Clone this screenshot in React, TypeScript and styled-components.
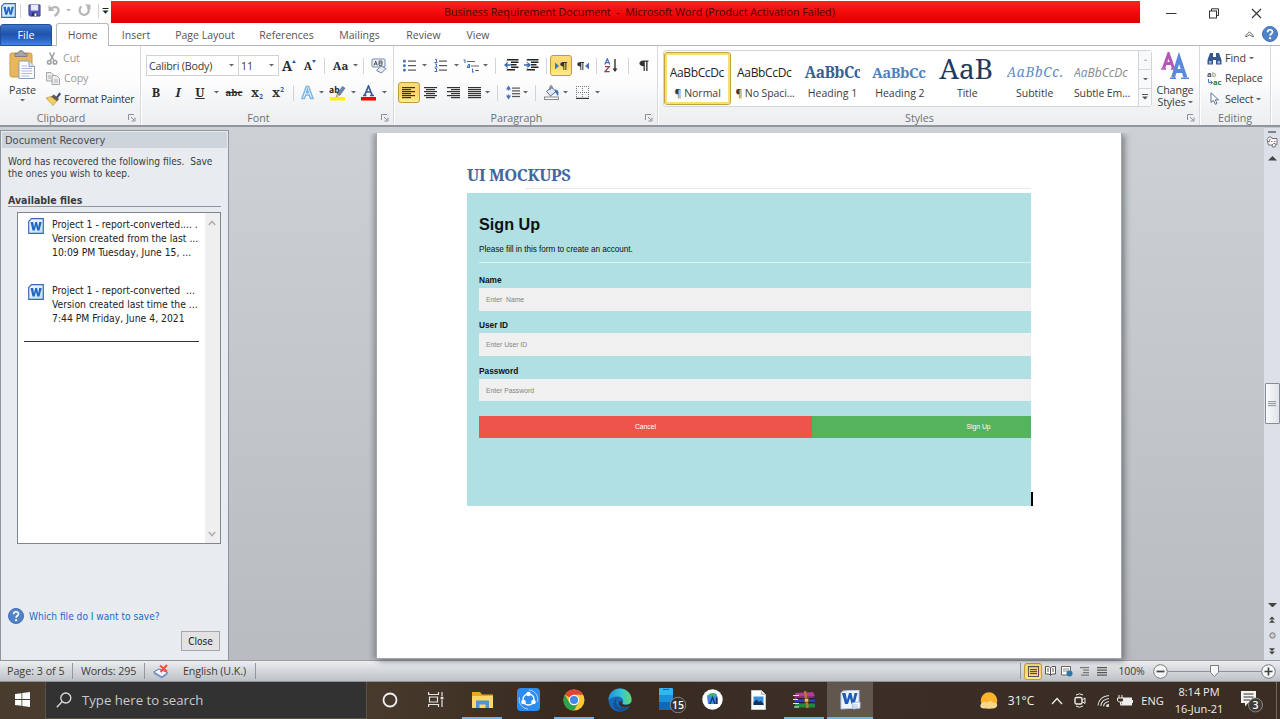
import React from 'react';
import styled, { createGlobalStyle, css } from 'styled-components';

const ui = `"Open Sans", "Noto Sans", sans-serif`;
const tahoma = `"DejaVu Sans Condensed", "DejaVu Sans", sans-serif`;

const Global = createGlobalStyle`
  * { box-sizing: border-box; }
  html, body { margin: 0; padding: 0; overflow: hidden; }
  body { width: 1280px; height: 719px; font-family: ${ui}; background: #fff; }
  svg { display: block; flex: none; }
`;

const Screen = styled.div`
  width: 1280px;
  height: 719px;
  display: flex;
  flex-direction: column;
  overflow: hidden;
`;

const Txt = styled.span<{ s?: number; ls?: number; c?: string; b?: boolean }>`
  font-size: ${p => p.s ?? 10.7}px;
  letter-spacing: ${p => p.ls ?? 0}px;
  color: ${p => p.c ?? '#3b3b3b'};
  font-weight: ${p => (p.b ? 700 : 400)};
  white-space: pre;
`;

/* ---------- title bar ---------- */
const TitleBar = styled.header`
  height: 24px;
  display: flex;
  align-items: flex-start;
`;
const QuickAccess = styled.div`
  width: 111px;
  height: 21px;
  display: flex;
  align-items: center;
  padding-left: 1px;
`;
const TitleStrip = styled.div`
  width: 1029px;
  height: 22px;
  margin-top: 1px;
  display: flex;
  align-items: center;
  padding-left: 333px;
  background: linear-gradient(#fb2222, #f50d0d 45%, #d90000);
`;
const WindowButtons = styled.div`
  flex: 1;
  height: 26px;
  display: flex;
  align-items: center;
  padding-left: 26px;
  gap: 32px;
`;
const Cell = styled.div<{ w: number }>`
  width: ${p => p.w}px;
  flex: none;
  display: flex;
  align-items: center;
  justify-content: center;
`;
const Divider = styled.i<{ h?: number; c?: string }>`
  width: 1px;
  height: ${p => p.h ?? 16}px;
  background: ${p => p.c ?? '#d0d3d8'};
`;

/* ---------- tabs ---------- */
const Tabs = styled.nav`
  height: 22px;
  display: flex;
  align-items: flex-end;
  border-bottom: 1px solid #b2b6bc;
`;
const Tab = styled.div<{ w: number; kind?: 'file' | 'active' }>`
  width: ${p => p.w}px;
  height: 22px;
  display: flex;
  align-items: center;
  justify-content: center;
  padding-top: 1px;
  ${p => p.kind === 'file' && css`
    margin-right: 4px;
    margin-bottom: -1px;
    padding-top: 0;
    border-radius: 3px 3px 0 0;
    border: 1px solid #1f4f9d;
    background: linear-gradient(#3f74c9, #1f54ae 45%, #2a63c0 70%, #4485df);
  `}
  ${p => p.kind === 'active' && css`
    height: 23px;
    margin-bottom: -1px;
    padding-top: 0;
    border: 1px solid #b6babf;
    border-bottom: none;
    border-radius: 3px 3px 0 0;
    background: #fff;
  `}
`;
const TabsEnd = styled.div`
  flex: 1;
  height: 22px;
  display: flex;
  align-items: center;
  justify-content: flex-end;
  gap: 8px;
  padding-right: 2px;
`;

/* ---------- ribbon ---------- */
const Ribbon = styled.section`
  height: 81px;
  flex: none;
  display: flex;
  background: linear-gradient(#fff, #fdfdfe 45%, #f1f3f5 75%, #eceef1);
  border-bottom: 2px solid #92979e;
`;
const Group = styled.div<{ w: number }>`
  width: ${p => p.w}px;
  height: 79px;
  display: flex;
  flex-direction: column;
  border-right: 1px solid #d6d9dd;
  box-shadow: 1px 0 0 #fff;
`;
const GroupBody = styled.div<{ pl?: number; pt?: number; col?: boolean }>`
  height: 63px;
  display: flex;
  flex-direction: ${p => (p.col ? 'column' : 'row')};
  padding-left: ${p => p.pl ?? 4}px;
  padding-top: ${p => p.pt ?? 6}px;
`;
const GroupLabel = styled.div<{ shift?: number }>`
  height: 16px;
  display: grid;
  grid-template-columns: 16px 1fr 16px;
  align-items: center;
  justify-items: center;
  padding-top: 2px;
  margin-left: ${p => p.shift ?? 0}px;
`;
const ToolRow = styled.div`
  height: 27px;
  display: flex;
  align-items: center;
`;
const Combo = styled.div<{ w: number }>`
  width: ${p => p.w}px;
  height: 21px;
  margin-right: -1px;
  display: flex;
  align-items: center;
  justify-content: space-between;
  padding: 0 4px 0 2px;
  border: 1px solid #cfd2d6;
  background: #fff;
`;
const Hot = styled.div<{ w?: number; h?: number }>`
  width: ${p => p.w ?? 22}px;
  height: ${p => p.h ?? 21}px;
  display: flex;
  align-items: center;
  justify-content: center;
  border: 1px solid #c39b3c;
  border-radius: 3px;
  background: linear-gradient(#fbdc82, #fbd566 50%, #ffec8b);
`;
const Glyph = styled.b<{ s?: number; it?: boolean; u?: boolean; strike?: boolean }>`
  font-family: "Noto Serif", "DejaVu Serif", "Liberation Serif", serif;
  font-size: ${p => p.s ?? 12.5}px;
  line-height: 14px;
  color: #2c2c2c;
  font-style: ${p => (p.it ? 'italic' : 'normal')};
  text-decoration: ${p => (p.u ? 'underline' : p.strike ? 'line-through' : 'none')};
`;
const Mark = styled.sup<{ low?: boolean }>`
  font-family: ${ui};
  font-size: 6.5px;
  line-height: 7px;
  font-weight: 700;
  color: #2f5ca8;
  align-self: ${p => (p.low ? 'flex-end' : 'flex-start')};
`;
const PasteColumn = styled.div`
  width: 46px;
  display: flex;
  flex-direction: column;
  align-items: center;
  padding: 2px 1px 0 0;
  > span { margin: 2px 0 1px; line-height: 16px; }
`;
const CommandList = styled.div`
  display: flex;
  flex-direction: column;
`;
const Command = styled.div<{ g?: number; h?: number }>`
  height: ${p => p.h ?? 20.5}px;
  display: flex;
  align-items: center;
  gap: ${p => p.g ?? 4}px;
`;
const Gallery = styled.div`
  width: 489px;
  height: 57px;
  display: flex;
  padding: 1px 0;
  border: 1px solid #d3d6da;
  border-radius: 3px;
  background: #fff;
`;
const StyleCard = styled.div<{ on?: boolean }>`
  width: 67.4px;
  height: 53px;
  flex: none;
  display: flex;
  flex-direction: column;
  align-items: center;
  border-radius: 3px;
  padding: 1px 5px 0;
  border: 1px solid transparent;
  ${p => p.on && css`
    border-color: #c6a143;
    box-shadow: inset 0 0 0 2px #fbdd77;
  `}
`;
const Sample = styled.div`
  width: 56px;
  height: 32px;
  display: flex;
  align-items: flex-end;
  overflow: hidden;
`;
const SampleText = styled.span<{ f?: string; s: number; c: string; ls?: number; w?: number; it?: boolean; lh?: number }>`
  font-family: ${p => p.f ?? ui};
  font-size: ${p => p.s}px;
  line-height: ${p => p.lh ?? 27}px;
  color: ${p => p.c};
  letter-spacing: ${p => p.ls ?? 0}px;
  font-weight: ${p => p.w ?? 400};
  font-style: ${p => (p.it ? 'italic' : 'normal')};
  white-space: nowrap;
`;
const GalleryScroll = styled.div`
  width: 13px;
  margin: -1px 0;
  margin-left: auto;
  display: grid;
  grid-template-rows: 1fr 1fr 1fr;
  border-left: 1px solid #d3d6da;
  background: #f8f9fa;
  > div { display: flex; align-items: center; justify-content: center; }
  > div + div { border-top: 1px solid #d3d6da; }
`;
const ChangeStyles = styled.div`
  width: 46px;
  display: flex;
  flex-direction: column;
  align-items: center;
  padding-top: 2px;
  > span { margin-top: 4px; line-height: 12px; }
`;

/* ---------- workspace ---------- */
const Workspace = styled.main`
  height: 534px;
  flex: none;
  display: flex;
  background: linear-gradient(#cdd0d5, #b8bbc0);
  border-bottom: 1px solid #989ca2;
`;
const Panel = styled.aside`
  width: 229px;
  height: 531px;
  flex: none;
  margin-top: 3px;
  display: flex;
  flex-direction: column;
  border: 1px solid #8e959d;
  background: #e8ecf1;
  font-family: ${tahoma};
`;
const PanelTitle = styled.div`
  height: 16px;
  margin: 1px 1px 0;
  padding-left: 3px;
  display: flex;
  align-items: center;
  background: #cdd4dc;
`;
const PanelIntro = styled.div`
  margin: 8px 0 0 7px;
  line-height: 12.3px;
  height: 25px;
  display: flex;
  flex-direction: column;
`;
const PanelHeading = styled.div`
  margin: 12px 7px 0 7px;
  height: 14px;
  line-height: 12px;
  border-bottom: 1px solid #8e949c;
`;
const FileBox = styled.div`
  width: 204px;
  height: 332px;
  margin: 5px 0 0 16px;
  display: flex;
  border: 1px solid #80868e;
  background: #fff;
`;
const FileList = styled.div`
  width: 187px;
  padding: 5px 0 0 10px;
`;
const FileEntry = styled.div`
  height: 65.5px;
  display: flex;
  gap: 8px;
`;
const FileLines = styled.div`
  display: flex;
  flex-direction: column;
  margin-top: -1px;
  > span { height: 14px; line-height: 14px; }
`;
const FileRule = styled.div`
  width: 175px;
  height: 1px;
  margin: -8px 0 0 -4px;
  background: #333;
`;
const FileScroll = styled.div`
  flex: 1;
  display: flex;
  flex-direction: column;
  justify-content: space-between;
  align-items: center;
  padding: 7px 2px 6px 0;
  background: #efefef;
`;
const HelpRow = styled.div`
  margin: 64px 0 0 7px;
  height: 16px;
  display: flex;
  align-items: center;
  gap: 5px;
`;
const CloseButton = styled.div`
  width: 39px;
  height: 20px;
  margin: 7px 8px 0 auto;
  display: flex;
  align-items: center;
  justify-content: center;
  border: 1px solid #a7a7a7;
  background: #e2e2e2;
`;
const Canvas = styled.div`
  flex: 1;
  height: 533px;
  padding: 6px 0 0 147px;
`;
const Page = styled.article`
  width: 746px;
  height: 526px;
  padding: 31px 0 0 90px;
  border: 1px solid #a3a7ac;
  border-top: none;
  background: #fff;
  box-shadow: 3px 2px 6px rgba(70, 75, 82, .55), -3px 0 5px rgba(70, 75, 82, .35);
  clip-path: inset(0 -10px -10px -10px);
`;
const DocHeading = styled.h1`
  margin: 0;
  height: 24px;
  font: 700 16.5px/22px "Noto Serif", Cambria, "Liberation Serif", serif;
  letter-spacing: -.42px;
  color: #43669e;
`;
const HeadingRule = styled.div`
  width: 506px;
  height: 1px;
  margin: 0 0 4px 58px;
  background: #e6e8ea;
`;
const FormLine = styled.div`
  display: flex;
  align-items: flex-end;
`;
const Form = styled.form`
  width: 564px;
  height: 313px;
  padding: 21px 0 0 12px;
  background: #b0dfe4;
  font-family: "Liberation Sans", Arial, sans-serif;
  color: #111;
`;
const Caret = styled.i`
  width: 2px;
  height: 14px;
  background: #000;
`;
const FormTitle = styled.h2`
  margin: 0;
  height: 31px;
  font-size: 16.2px;
  line-height: 20px;
  font-weight: 700;
`;
const FormText = styled.p`
  margin: 0;
  height: 17px;
  font-size: 8.2px;
  line-height: 10px;
  letter-spacing: -.05px;
`;
const FormRule = styled.div`
  height: 1px;
  background: #e3f0f2;
`;
const Field = styled.div`
  height: 45.4px;
  display: flex;
  flex-direction: column;
`;
const FieldLabel = styled.label`
  height: 14px;
  font-size: 8.3px;
  line-height: 12px;
  font-weight: 700;
`;
const Input = styled.div`
  height: 22.6px;
  padding-left: 7px;
  font-size: 6.8px;
  line-height: 23px;
  color: #858585;
  background: #f0f0f0;
  white-space: pre;
`;
const FormButtons = styled.div`
  height: 22px;
  display: flex;
  overflow: hidden;
`;
const FormButton = styled.div<{ c: string }>`
  width: 333px;
  flex: none;
  font-size: 6.8px;
  line-height: 22px;
  text-align: center;
  color: #fff;
  background: ${p => p.c};
`;
const VScroll = styled.div`
  width: 16px;
  height: 533px;
  display: flex;
  flex-direction: column;
  align-items: center;
  border-top: 1px solid #c4c8cd;
  background: #dce1e9;
`;
const Thumb = styled.div`
  width: 15px;
  height: 41px;
  display: flex;
  align-items: center;
  justify-content: center;
  border: 1px solid #868c95;
  border-radius: 1px;
  background: linear-gradient(90deg, #fafbfc, #dfe3e9);
`;
const Gap = styled.div<{ h: number }>`
  height: ${p => p.h}px;
  flex: none;
`;

/* ---------- status bar ---------- */
const StatusBar = styled.footer`
  height: 21px;
  flex: none;
  display: flex;
  align-items: center;
  background: linear-gradient(#eceef0, #d6d9dc 45%, #bec2c7);
  border-bottom: 1px solid #8f9296;
`;
const StatusItem = styled.div<{ w: number; pl?: number }>`
  width: ${p => p.w}px;
  height: 16px;
  display: flex;
  align-items: center;
  padding-left: ${p => p.pl ?? 7}px;
  border-right: 1px solid #93979c;
`;
const ZoomTrack = styled.div`
  width: 93px;
  height: 14px;
  display: flex;
  align-items: center;
  justify-content: center;
  background: linear-gradient(#8e9297, #8e9297) center / 100% 1px no-repeat;
`;

/* ---------- taskbar ---------- */
const Taskbar = styled.div`
  height: 37px;
  flex: none;
  display: flex;
  background: linear-gradient(90deg, #483c2f, #47392c 30%, #38291f 45%, #3a2e26 60%, #392d24);
`;
const SearchBox = styled.div`
  width: 322px;
  height: 37px;
  flex: none;
  display: flex;
  align-items: center;
  gap: 10px;
  padding-left: 10px;
  background: #323232;
  border: 1px solid #5a5148;
  border-top: none;
`;
const TaskButton = styled.div<{ w?: number; open?: boolean; on?: boolean }>`
  width: ${p => p.w ?? 46}px;
  height: 37px;
  flex: none;
  display: flex;
  align-items: center;
  justify-content: center;
  border-bottom: 2px solid transparent;
  ${p => p.open && css`
    border-image: linear-gradient(90deg, transparent 4px, #76b1e6 4px, #76b1e6 calc(100% - 4px), transparent calc(100% - 4px)) 1;
    border-width: 0 0 2px;
    border-style: solid;
  `}
  ${p => p.on && css`background: #62574e; border-bottom-color: #76b1e6;`}
`;
const PhoneSlot = styled.div`
  padding-left: 14px;
`;
const Tray = styled.div`
  flex: 1;
  display: flex;
  align-items: center;
`;
const Clock = styled.div`
  width: 56px;
  display: flex;
  flex-direction: column;
  align-items: center;
  > span { line-height: 16.5px; }
`;
const DesktopPeek = styled.i`
  width: 4px;
  height: 37px;
  margin-left: auto;
  border-left: 1px solid #75695f;
`;

/* ---------- drawings ---------- */
const Arrow = ({ c = '#666', up = false, w = 6 }: { c?: string; up?: boolean; w?: number }) => (
  <svg width={w} height={w / 2} viewBox="0 0 6 3"><path d={up ? 'M0 3L3 0L6 3Z' : 'M0 0L3 3L6 0Z'} fill={c} /></svg>
);
const Launcher = () => (
  <svg width="8" height="8" viewBox="0 0 8 8" fill="none" stroke="#8a8f96">
    <path d="M.5 6V.5H6" /><path d="M3 3L6 6M7 3.500V7H3.500" /></svg>
);
const WordIcon = ({ s = 16 }: { s?: number }) => (
  <svg width={s} height={s} viewBox="0 0 16 16">
    <defs><linearGradient id="wordFace" x1="0" y1="0" x2="1" y2="1"><stop offset="0" stopColor="#f7fbff" /><stop offset="1" stopColor="#b9dcf7" /></linearGradient></defs>
    <path d="M3.500 .7H15.300V15.300H.7V3.500Z" fill="url(#wordFace)" stroke="#3c68ab" strokeWidth="1.200" />
    <path d="M2.500 4H5.200L6 9.300L7.200 4H9L10.200 9.300L11.200 4H13.700L11.500 12.500H9.300L8 7.700L6.700 12.500H4.500Z" fill="#2467c0" />
  </svg>
);
const HelpIcon = ({ s = 15 }: { s?: number }) => (
  <svg width={s} height={s} viewBox="0 0 16 16">
    <circle cx="8" cy="8" r="7.500" fill="#5083ca" stroke="#4470b5" />
    <path d="M5.600 6.200C5.600 2.900 10.600 3 10.500 6C10.400 7.800 8.100 7.800 8.100 9.800" fill="none" stroke="#fff" strokeWidth="1.700" />
    <circle cx="8.100" cy="12.200" r="1.100" fill="#fff" />
  </svg>
);
type LineSpec = [number, number, number];
const Lines = ({ rows, w = 14, h = 12, c = '#333', children }: { rows: LineSpec[]; w?: number; h?: number; c?: string; children?: React.ReactNode }) => (
  <svg width={w} height={h} viewBox={`0 0 ${w} ${h}`}>
    {rows.map(([x, y, l], i) => <rect key={i} x={x} y={y} width={l} height="1.200" fill={c} />)}
    {children}
  </svg>
);
const alignRows = (kind: 'l' | 'c' | 'r' | 'j'): LineSpec[] =>
  [13, 9, 13, 9, 13, 9].map((l, i) => {
    const len = kind === 'j' ? 13 : l;
    return [kind === 'r' ? 13 - len : kind === 'c' ? (13 - len) / 2 : 0, i * 2, len] as LineSpec;
  });

const SaveIcon = () => (
  <svg width="13" height="13" viewBox="0 0 14 14">
    <path d="M1 1H13V13H2L1 12Z" fill="#5b5fc4" stroke="#3e4190" />
    <rect x="3" y="1" width="8" height="6" fill="#e8ebfa" /><rect x="4" y="9" width="6" height="4" fill="#2d2f66" /><rect x="7" y="10" width="2" height="3" fill="#fff" />
  </svg>
);
const UndoIcon = () => (
  <svg width="13" height="13" viewBox="0 0 13 13"><path d="M3 4.500C7 2 11 3 10.500 7C10.200 9.500 8 11 6.500 12" fill="none" stroke="#b4b6ba" strokeWidth="2.200" /><path d="M.5 1V7H6.500Z" fill="#b4b6ba" /></svg>
);
const RedoIcon = () => (
  <svg width="13" height="13" viewBox="0 0 13 13"><path d="M3.500 2.500A4.600 4.600 0 1 0 9.500 3" fill="none" stroke="#b4b6ba" strokeWidth="2.200" /><path d="M7 .5H12.500V6Z" fill="#b4b6ba" /></svg>
);
const PasteIcon = () => (
  <svg width="27" height="30" viewBox="0 0 27 30">
    <rect x="1" y="3" width="22" height="24" rx="2" fill="#e8b65c" stroke="#d09b40" />
    <path d="M6 3.500H9C9 -.3 15 -.3 15 3.500H18V6.500H6Z" fill="#a2a7ad" stroke="#6f757c" strokeWidth=".8" />
    <path d="M10 11H20L25.500 16.500V28.500H10Z" fill="#fbfcfe" stroke="#8b9dbb" />
    <path d="M20 11V16.500H25.500" fill="#dbe4f1" stroke="#8b9dbb" />
    <path d="M12.500 16H18M12.500 18.500H23M12.500 21H23M12.500 23.500H23M12.500 26H20" stroke="#a4b5cf" strokeWidth=".9" />
  </svg>
);
const CutIcon = () => (
  <svg width="13" height="13" viewBox="0 0 13 13" fill="none" stroke="#9a9da1" strokeWidth="1.500"><path d="M3.500 .5L8 8.500M8.500 .5L4.500 8.500" /><circle cx="3.300" cy="10.300" r="1.800" /><circle cx="9" cy="10.300" r="1.800" /></svg>
);
const CopyIcon = () => (
  <svg width="14" height="13" viewBox="0 0 14 13" fill="#eceded" stroke="#a3a6aa"><path d="M.5 .5H5L7.500 3V9H.5Z" /><path d="M6 3.500H10.500L13.500 6.500V12.500H6Z" /><path d="M2 4H5M2 6H5M8 8H12M8 10H12" strokeWidth=".8" /></svg>
);
const PainterIcon = () => (
  <svg width="15" height="14" viewBox="0 0 15 14"><path d="M10 5L13.500 .5L15 2L11.500 6.500Z" fill="#33438c" /><path d="M0 6L5 4.500L11 9L7 13.500Z" fill="#f0cf69" stroke="#b98b2c" strokeWidth=".6" /><path d="M5 4.500L8 2.500L13 7L11 9.200Z" fill="#6b5b4a" /></svg>
);
const ClearIcon = () => (
  <svg width="16" height="16" viewBox="0 0 16 16"><rect x="1" y="1" width="13" height="8" rx="1" fill="#f0f4fa" stroke="#6d88b5" /><path d="M3 7.500L4.700 3L6.300 7.500M3.500 6H6M8 3V7.300H11V5H8M8 3H11V5" fill="none" stroke="#444" strokeWidth=".9" /><path d="M5.500 12.500L10 8L15 10.500L10.500 15Z" fill="#e4e9f2" stroke="#7184a8" /></svg>
);
const EffectIcon = () => (
  <svg width="15" height="15" viewBox="0 0 15 15"><path d="M2 13.500L6.300 1.500H8.700L13 13.500H10.500L9.300 10H5.700L4.500 13.500ZM6.400 7.800H8.600L7.500 4.500Z" fill="#fff" stroke="#7bb5e3" strokeWidth="1.500" /></svg>
);
const HighlightIcon = () => (
  <svg width="17" height="16" viewBox="0 0 17 16"><rect x="1" y="12" width="15" height="3.500" fill="#fff100" />
    <text x="0" y="8" fontSize="8.500" fontWeight="700" fontFamily="Open Sans" fill="#222">ab</text><path d="M8 9L13.500 1.500L16 3.200L11 10Z" fill="#6d87bb" stroke="#3e5687" strokeWidth=".6" /><path d="M8 9L11 10L7 12Z" fill="#fff100" stroke="#555" strokeWidth=".4" /></svg>
);
const FontColorIcon = () => (
  <svg width="15" height="16" viewBox="0 0 15 16"><rect x="0" y="12" width="15" height="3.500" fill="#f00" />
    <path d="M2 10.500H5.500M9 10.500H13M3.500 10.500L7.500 1L11.300 10.500M5 7H9.700" fill="none" stroke="#3a5a96" strokeWidth="1.700" /></svg>
);
const BulletIcon = ({ square = false }: { square?: boolean }) => (
  <Lines rows={[[5, 1.5, 8], [5, 6, 8], [5, 10.5, 8]]} c="#555" w={13} h={13}>
    {[0, 4.5, 9].map(y => square
      ? <path key={y} d={`M1 ${y + 0.5}H2.500V${y + 3.3}M.5 ${y + 3.5}H3.500`} stroke="#4672b8" fill="none" />
      : <rect key={y} x="0" y={y + 0.7} width="2.800" height="2.800" rx="1" fill="#4672b8" />)}
  </Lines>
);
const MultiIcon = () => (
  <svg width="16" height="14" viewBox="0 0 16 14"><path d="M4 2.500H12M8 7H16M12 11.500H16" stroke="#666" /><path d="M.5 1H2V4M5 5.500H6.500V8.500H4.500V7H6.500M9.500 9.500V13M9 13H11" fill="none" stroke="#4672b8" strokeWidth="1.100" /></svg>
);
const IndentIcon = ({ out = false }: { out?: boolean }) => (
  <svg width="15" height="13" viewBox="0 0 15 13"><path d="M3 .8H14.500M7 3.300H14.500M7 5.800H12.500M7 8.300H14.500M3 10.800H11" stroke="#222" strokeWidth="1.400" /><path d="M3 .8V12" stroke="#777" strokeDasharray="1 1" />
    {out ? <path d="M0 6L3.500 3V5.200H7V6.800H3.500V9Z" fill="#3b6cb8" /> : <path d="M7 6L3.500 3V5.200H0V6.800H3.500V9Z" fill="#3b6cb8" />}</svg>
);
const PilcrowIcon = ({ side }: { side?: 'l' | 'r' }) => (
  <svg width="14" height="12" viewBox="0 0 14 12">
    {side === 'l' && <path d="M1 2.500L5 6L1 9.500Z" fill="#4672b8" />}
    {side === 'r' && <path d="M13 2.500L9 6L13 9.500Z" fill="#4672b8" />}
    <g transform={side === 'l' ? 'translate(5.5 2) scale(.8)' : side === 'r' ? 'translate(.5 2) scale(.8)' : 'translate(2.5 0.500) scale(1.050)'}>
      <path d="M4.500 0H9.500V1.200H8.600V10H7.300V1.200H6V10H4.800V5.500C-.3 5.500 -.3 0 4.500 0Z" fill="#333" /></g>
  </svg>
);
const SortIcon = () => (
  <svg width="15" height="15" viewBox="0 0 15 15" fill="none"><path d="M.8 6.500L3.300 .8L5.800 6.500M1.700 4.700H5" stroke="#4672b8" strokeWidth="1.300" /><path d="M1 8.700H5.300L1 13.700H5.700" stroke="#a03b45" strokeWidth="1.300" /><path d="M11 1V13" stroke="#333" strokeWidth="1.400" /><path d="M8.500 10.500L11 14L13.500 10.500Z" fill="#333" /></svg>
);
const SpacingIcon = () => (
  <Lines rows={[[6, 2.5, 8], [6, 5.3, 8], [6, 8.1, 8], [6, 10.9, 8]]} c="#555" w={14} h={15}>
    <path d="M2.500 2V5.500M2.500 9.500V13" stroke="#4672b8" strokeWidth="1.300" /><path d="M0 4.500L2.500 .5L5 4.500ZM0 10.500L2.500 14.500L5 10.500Z" fill="#4672b8" />
  </Lines>
);
const ShadingIcon = () => (
  <svg width="16" height="15" viewBox="0 0 16 15"><rect x=".5" y="12" width="14" height="2.500" fill="#fff" stroke="#888" /><path d="M2.500 6.500L7.500 2L12 6.500L6.500 11Z" fill="#dfe8f4" stroke="#5d6d88" /><path d="M6 5V1.500C6 .3 8 .3 8 1.500V4" fill="none" stroke="#5d6d88" /><path d="M11 4.500C15 5 15 7.500 14 11C12 10 13 8 11 7Z" fill="#4672b8" /></svg>
);
const BorderIcon = () => (
  <svg width="13" height="13" viewBox="0 0 13 13"><path d="M.5 0V12M6.500 0V12M12.500 0V12M0 .5H13M0 6.500H13" stroke="#777" strokeDasharray="1 1" /><path d="M0 12.400H13" stroke="#333" strokeWidth="1.200" /></svg>
);
const ChangeStylesIcon = () => (
  <svg width="28" height="28" viewBox="0 0 28 28" fill="none">
    <path d="M2.500 16.500L7.500 2L12.500 16.500M4 11.500H11" stroke="#b657b8" strokeWidth="3" /><path d="M0 17H5M10 17H15" stroke="#b657b8" strokeWidth="1.400" />
    <path d="M12 25.500L18 6L24.500 25.500M14.500 19H22" stroke="#5a8bdb" strokeWidth="3.800" /><path d="M9 26.300H15M20 26.300H28" stroke="#5a8bdb" strokeWidth="1.600" />
  </svg>
);
const FindIcon = () => (
  <svg width="15" height="13" viewBox="0 0 15 13"><path d="M3 1H6V5H9V1H12L14.500 8V12.500H9V8H6V12.500H.5V8Z" fill="#39588f" /><path d="M2 9H4.500V11.500H2ZM10.500 9H13V11.500H10.500Z" fill="#9fb8de" /></svg>
);
const ReplaceIcon = () => (
  <svg width="15" height="15" viewBox="0 0 15 15"><text x="0" y="6" fontSize="7.500" fontWeight="700" fontFamily="Open Sans" fill="#444">a<tspan fill="#aaa">b</tspan></text><text x="6" y="14" fontSize="7.500" fontWeight="700" fontFamily="Open Sans" fill="#237a34">ac</text><path d="M1.500 8V11.500H5M3.500 9.500L5.500 11.500L3.500 13.500" fill="none" stroke="#4672b8" /></svg>
);
const SelectIcon = () => (
  <svg width="10" height="13" viewBox="0 0 10 13"><path d="M1 .8V10.500L3.500 8.500L5.300 12.300L7 11.500L5.300 7.800H8.500Z" fill="#fff" stroke="#5c7196" /></svg>
);
const Chevron = ({ up = false }: { up?: boolean }) => (
  <svg width="8" height="6" viewBox="0 0 8 6"><path d={up ? 'M.8 5L4 1.500L7.200 5' : 'M.8 1L4 4.500L7.200 1'} fill="none" stroke="#b0b0b0" strokeWidth="1.600" /></svg>
);
const NoteIcon = () => (
  <svg width="12" height="12" viewBox="0 0 12 12" fill="#fafafa" stroke="#77727a"><path d="M1 3.500L3 1H5L6 2.500H11V8.500H9.500L9 11H6.500L6 9H2.500Z" /><path d="M1 5.500H3.500L4 3M6 9L7.500 7.500H9.500" fill="none" /><path d="M5 5.500H6.500M8 5.500H9.500" stroke="#b06a70" /></svg>
);
const ProofIcon = () => (
  <svg width="16" height="15" viewBox="0 0 16 15"><path d="M.8 8L6 5L14.500 8.500L9 13Z" fill="#f4f7fc" stroke="#5573ad" /><path d="M.8 8V10L9 14.500L14.500 10.500V8.500L9 13Z" fill="#7a97cf" /><path d="M7 1.500L14 7.500M14 1L7.500 8" stroke="#e8543f" strokeWidth="2" /></svg>
);
const Gripper = () => <Lines rows={[[0, 0, 8], [0, 2, 8], [0, 4, 8]]} w={8} h={6} c="#9da2a9" />;
const ZoomButton = ({ plus = false }: { plus?: boolean }) => (
  <svg width="15" height="15" viewBox="0 0 15 15"><circle cx="7.500" cy="7.500" r="6.800" fill="#f6f7f8" stroke="#777b80" /><path d={plus ? 'M3.500 7.500H11.500M7.500 3.500V11.500' : 'M3.500 7.500H11.500'} stroke="#444" strokeWidth="1.700" /></svg>
);

/* taskbar drawings */
const ExplorerIcon = () => (
  <svg width="21" height="18" viewBox="0 0 21 18"><path d="M0 1H8L10 3.500H21V17H0Z" fill="#e8a823" /><path d="M0 5H21V17H0Z" fill="#fbd768" /><path d="M4 17V9.500H17V17H13.500V13.500H7.500V17Z" fill="#4e97ce" /></svg>
);
const ShareIcon = () => (
  <svg width="23" height="23" viewBox="0 0 23 23"><rect width="23" height="23" rx="4" fill="#2d8cf4" /><circle cx="11.500" cy="11.500" r="5.500" fill="none" stroke="#fff" strokeWidth="1.400" /><circle cx="11.500" cy="6" r="2.300" fill="#fff" /><circle cx="6.500" cy="14" r="2.300" fill="#fff" /><circle cx="16.500" cy="14" r="2.300" fill="#fff" /><path d="M12 2A9.500 9.500 0 0 1 20.500 14M11 21A9.500 9.500 0 0 1 2.500 9" fill="none" stroke="#a9d2fb" /></svg>
);
const ChromeIcon = () => (
  <svg width="22" height="22" viewBox="0 0 22 22"><circle cx="11" cy="11" r="10.500" fill="#fbc92f" /><path d="M11 11L1.900 5.750A10.500 10.500 0 0 1 20.100 5.750Z" fill="#e3443a" /><path d="M11 5.750H20.100L15.550 13.600Z" fill="#fbc92f" /><path d="M1.900 5.750A10.500 10.500 0 0 0 11 21.500L15.500 13.600L11 11L6.450 13.600Z" fill="#2ba24c" /><circle cx="11" cy="11" r="5.200" fill="#fff" /><circle cx="11" cy="11" r="4.100" fill="#4587ec" /></svg>
);
const EdgeIcon = () => (
  <svg width="24" height="24" viewBox="0 0 24 24">
    <defs><linearGradient id="edgeTop" x1="0" x2="1"><stop offset="0" stopColor="#1c94dc" /><stop offset=".6" stopColor="#37c6d0" /><stop offset="1" stopColor="#67d865" /></linearGradient></defs>
    <circle cx="12" cy="12" r="11.500" fill="#1668b8" />
    <path d="M.5 12A11.500 11.500 0 0 1 23.500 12C23.500 17 17 17.500 14.500 16C16.500 13 14.500 8.500 9.500 8.500C5 8.500 1.500 11 .5 12Z" fill="url(#edgeTop)" />
    <path d="M8 13C7.500 19 14 21.500 20.500 18.500C17 24 10 24.500 6.500 20C4.500 16.500 5.500 12 9.500 9.500C8.500 10.500 8 12 8 13Z" fill="#134f95" />
    <path d="M14.500 16C17 17.500 21 17 22.800 14.800L24 18.500L20.500 18.500C15.500 20.500 12 18.500 11 16.500C10.500 14.500 11.500 13.500 12.500 13C14.500 13 13.500 15 14.500 16Z" fill="#3a2c22" />
  </svg>
);
const PhoneIcon = () => (
  <svg width="30" height="26" viewBox="0 0 30 26"><rect x="1" y="1" width="14" height="22" rx="1" fill="#30b6f1" /><path d="M1 8H15V16H1Z" fill="#1b91dc" /><path d="M1 15H15V23H1Z" fill="#0e69b8" /><rect x="5" y="2" width="6" height="1" fill="#0e69b8" />
    <circle cx="20" cy="18" r="7.800" fill="#38332f" stroke="#9a9692" strokeWidth=".8" /><text x="20" y="22" textAnchor="middle" fontSize="10.500" fontWeight="600" fontFamily="Open Sans" fill="#fff">15</text></svg>
);
const StudioIcon = () => (
  <svg width="21" height="21" viewBox="0 0 21 21"><circle cx="10.500" cy="10.500" r="10.200" fill="#fff" /><path d="M5 6.500L14 4.500L16 9V15H6Z" fill="#3f86ee" /><path d="M5.500 7C7 3.500 12.500 3 14.500 6L13 7.500H6Z" fill="#3cb371" /><path d="M8 15L10.500 8.500L13 15M14.500 8.500V15" stroke="#12345e" strokeWidth="1.300" fill="none" /></svg>
);
const PictureFileIcon = () => (
  <svg width="15" height="20" viewBox="0 0 15 20"><path d="M.5 .5H10.500L14.500 4.500V19.500H.5Z" fill="#fcfcfc" stroke="#c9c9c9" /><path d="M10.500 .5V4.500H14.500" fill="#ddd" stroke="#bbb" /><rect x="2.500" y="6.500" width="10" height="8.500" fill="#3c8fe0" /><path d="M2.500 15V12.500L5.500 9.500L8 12L9.500 10.700L12.500 13.500V15Z" fill="#10345f" /></svg>
);
const WinRarIcon = () => (
  <svg width="22" height="18" viewBox="0 0 22 18"><path d="M2 2L20 1L22 5L4 6.500Z" fill="#b43c9c" /><path d="M1 5H21V8.500H2Z" fill="#8e2a76" /><path d="M2 8H22V11.500H2Z" fill="#2f3fc4" /><path d="M2 12H22V16.500H2Z" fill="#1c8b3a" /><path d="M4 7.700H22M4 11.800H22" stroke="#15131a" /><path d="M0 4.500H6M0 8.500H5M0 12.500H6M1 16H6" stroke="#e9e2e8" strokeWidth="1.200" /><path d="M12 0L14.500 17" stroke="#b9772a" strokeWidth="2.500" /><rect x="11.500" y="7.500" width="4" height="3.500" fill="#e7c65b" stroke="#6d4a12" strokeWidth=".7" /></svg>
);
const TaskWordIcon = () => (
  <svg width="21" height="20" viewBox="0 0 21 20"><path d="M3 1L19 0V18L1 19V3Z" fill="#eef4fc" stroke="#b3c8e6" /><path d="M2 3H5.500L7 10L9 3H11.500L13 10L14.500 3H17.500L14.500 14H11.500L10 8L8 14H5Z" fill="#1f5ab4" /><path d="M12 13L20 12V18L13 19Z" fill="#fff" stroke="#aac0e0" /><path d="M13 15H18M13 17H18" stroke="#7d9bc9" strokeWidth=".7" /></svg>
);
const WeatherIcon = () => (
  <svg width="20" height="18" viewBox="0 0 20 18"><circle cx="10" cy="8.500" r="8.300" fill="#fbb32d" /><path d="M3 11C5 9 7 10 8.500 10.800C10 8.500 13 8.500 14 11C17 10 19 11.500 18 14C17.500 15.500 16 16.500 14 16.500H5C0 16.500 1 12 3 11Z" fill="#f7d68d" /></svg>
);
const TrayChevron = () => <svg width="12" height="8" viewBox="0 0 12 8"><path d="M1 7L6 1.500L11 7" fill="none" stroke="#eee" strokeWidth="1.300" /></svg>;
const MeetIcon = () => (
  <svg width="12" height="15" viewBox="0 0 12 15" fill="none" stroke="#eee"><rect x="1" y="4.500" width="7" height="6.500" rx="1.500" strokeWidth="1.400" /><path d="M8 7L11 5V10.500L8 8.500M2 2Q5.500 -.5 9 2M2 13Q5.500 15.500 9 13" /></svg>
);
const WifiIcon = () => (
  <svg width="13" height="13" viewBox="0 0 13 13" fill="none" stroke="#ddd" strokeWidth="1.100"><path d="M1 11.500Q2 2.500 12 1.500M3.800 12Q4.500 5.500 12 4.500M6.500 12.300Q7 8.500 12 7.500M9 12.500Q9.500 10.800 12 10.300" /><circle cx="11" cy="12" r=".6" /></svg>
);
const BatteryIcon = () => (
  <svg width="16" height="12" viewBox="0 0 16 12"><rect x="5" y="3" width="9.500" height="7" fill="#eee" stroke="#eee" /><path d="M15.500 5V8" stroke="#eee" /><path d="M.5 3H6.500V5C6.500 6.500 5.500 7 3.500 7C1.500 7 .5 6.500 .5 5Z" fill="#3a2e26" stroke="#eee" /><path d="M2 0V3M5 0V3M3.500 7V10H5" fill="none" stroke="#eee" /></svg>
);
const NotifyIcon = () => (
  <svg width="24" height="24" viewBox="0 0 24 24"><path d="M1 2H16V14H8L5 17.500V14H1Z" fill="#f5f5f5" /><path d="M3.500 5H13.500M3.500 8H13.500M3.500 11H10" stroke="#3a2e26" /><circle cx="15.500" cy="16" r="7" fill="#403b38" stroke="#8d8782" /><text x="15.500" y="20" textAnchor="middle" fontSize="10.500" fontWeight="600" fontFamily="Open Sans" fill="#fff">3</text></svg>
);

const serif = '"Noto Serif", "Liberation Serif", serif';
type SampleStyle = { f?: string; s: number; c: string; ls?: number; w?: number; it?: boolean; lh?: number };
const galleryStyles: { name: string; sample: string; ls?: number; style: SampleStyle }[] = [
  { name: '¶ Normal', sample: 'AaBbCcDc', style: { s: 12, c: '#222', ls: -0.35 } },
  { name: '¶ No Spaci...', sample: 'AaBbCcDc', ls: -0.1, style: { s: 12, c: '#222', ls: -0.35 } },
  { name: 'Heading 1', sample: 'AaBbCc', style: { f: serif, s: 15.5, c: '#3a5f92', w: 700, ls: -0.5 } },
  { name: 'Heading 2', sample: 'AaBbCc', style: { f: serif, s: 14.5, c: '#4f81bd', w: 700, ls: -0.4 } },
  { name: 'Title', sample: 'AaB', style: { f: serif, s: 28, c: '#1f3a5f', lh: 35 } },
  { name: 'Subtitle', sample: 'AaBbCc.', style: { f: serif, s: 13.5, c: '#5e8bc4', it: true, ls: 0.7 } },
  { name: 'Subtle Em...', sample: 'AaBbCcDc', ls: -0.1, style: { s: 12, c: '#8a8a8a', it: true } },
];

const tabs: [string, number][] = [
  ['Insert', 54], ['Page Layout', 84], ['References', 79], ['Mailings', 67], ['Review', 61], ['View', 48],
];

const files: string[][] = [
  ['Project 1 - report-converted.... .', 'Version created from the last ...', '10:09 PM Tuesday, June 15, ...'],
  ['Project 1 - report-converted  ...', 'Version created last time the ...', '7:44 PM Friday, June 4, 2021'],
];

const Label = ({ text, shift }: { text: string; shift?: number }) => (
  <GroupLabel shift={shift}><i /><Txt c="#6d7178">{text}</Txt><Launcher /></GroupLabel>
);

export default function App() {
  return (
    <Screen>
      <Global />
      <TitleBar>
        <QuickAccess>
          <WordIcon s={15} />
          <Cell w={9}><Divider h={14} /></Cell>
          <Cell w={18}><SaveIcon /></Cell>
          <Cell w={22}><UndoIcon /></Cell>
          <Cell w={6}><Arrow c="#b4b6ba" w={5} /></Cell>
          <Cell w={27}><RedoIcon /></Cell>
          <Divider h={14} />
          <Cell w={12}><svg width="7" height="6" viewBox="0 0 7 6"><path d="M.5 .5H6.500" stroke="#222" /><path d="M.5 2.500H6.500L3.500 5.800Z" fill="#222" /></svg></Cell>
        </QuickAccess>
        <TitleStrip><Txt c="#4a0505">Business Requirement Document  -  Microsoft Word (Product Activation Failed)</Txt></TitleStrip>
        <WindowButtons>
          <svg width="11" height="11" viewBox="0 0 11 11"><path d="M0 5.500H10.500" stroke="#333" /></svg>
          <svg width="10" height="11" viewBox="0 0 10 11" fill="none" stroke="#333"><rect x=".5" y="3" width="7" height="7" /><path d="M2.500 3V.8H9.500V7.500H7.500" /></svg>
          <svg width="11" height="11" viewBox="0 0 11 11"><path d="M1 1L10 10M10 1L1 10" stroke="#333" strokeWidth="1.100" /></svg>
        </WindowButtons>
      </TitleBar>

      <Tabs>
        <Tab w={52} kind="file"><Txt c="#fff">File</Txt></Tab>
        <Tab w={53} kind="active"><Txt c="#555" s={10.5}>Home</Txt></Tab>
        {tabs.map(([t, w]) => <Tab key={t} w={w}><Txt c="#555" s={10.5}>{t}</Txt></Tab>)}
        <TabsEnd>
          <svg width="9" height="7" viewBox="0 0 9 7"><path d="M.8 4.500L4.500 .8L8.200 4.500V6L4.500 3.800L.8 6Z" fill="#fff" stroke="#555" strokeWidth=".9" /></svg>
          <HelpIcon s={16} />
        </TabsEnd>
      </Tabs>

      <Ribbon>
        <Group w={141}>
          <GroupBody pl={0} pt={2}>
            <PasteColumn>
              <PasteIcon />
              <Txt ls={-0.1}>Paste</Txt>
              <Arrow w={5} />
            </PasteColumn>
            <CommandList>
              <Command><CutIcon /><Txt c="#9b9b9b" ls={-0.1}>Cut</Txt></Command>
              <Command><CopyIcon /><Txt c="#9b9b9b" ls={-0.2}>Copy</Txt></Command>
              <Command g={3}><PainterIcon /><Txt ls={-0.3}>Format Painter</Txt></Command>
            </CommandList>
          </GroupBody>
          <Label text="Clipboard" shift={-18} />
        </Group>

        <Group w={253}>
          <GroupBody col>
            <ToolRow>
              <Cell w={1} />
              <Combo w={93}><Txt ls={-0.2}>Calibri (Body)</Txt><Arrow w={5} /></Combo>
              <Combo w={41}><Txt>11</Txt><Arrow w={5} /></Combo>
              <Cell w={22}><Glyph s={14}>A</Glyph><svg width="4" height="12" viewBox="0 0 4 12"><path d="M0 3L2 0L4 3Z" fill="#2f5ca8" /></svg></Cell>
              <Cell w={20}><Glyph s={11}>A</Glyph><svg width="4" height="12" viewBox="0 0 4 12"><path d="M0 0L2 3L4 0Z" fill="#2f5ca8" /></svg></Cell>
              <Cell w={9}><Divider /></Cell>
              <Cell w={23}><Glyph s={11.5}>Aa</Glyph></Cell>
              <Cell w={6}><Arrow w={5} /></Cell>
              <Cell w={10}><Divider /></Cell>
              <Cell w={21}><ClearIcon /></Cell>
            </ToolRow>
            <ToolRow>
              <Cell w={22}><Glyph>B</Glyph></Cell>
              <Cell w={22}><Glyph it>I</Glyph></Cell>
              <Cell w={22}><Glyph u>U</Glyph></Cell>
              <Cell w={10}><Arrow w={5} /></Cell>
              <Cell w={26}><Glyph s={9.5} strike>abc</Glyph></Cell>
              <Cell w={20}><Glyph>x</Glyph><Mark low>2</Mark></Cell>
              <Cell w={22}><Glyph>x</Glyph><Mark>2</Mark></Cell>
              <Cell w={8}><Divider /></Cell>
              <Cell w={21}><EffectIcon /></Cell>
              <Cell w={6}><Arrow w={5} /></Cell>
              <Cell w={26}><HighlightIcon /></Cell>
              <Cell w={6}><Arrow w={5} /></Cell>
              <Cell w={25}><FontColorIcon /></Cell>
              <Cell w={6}><Arrow w={5} /></Cell>
            </ToolRow>
          </GroupBody>
          <Label text="Font" shift={-17} />
        </Group>

        <Group w={264}>
          <GroupBody col>
            <ToolRow>
              <Cell w={22}><BulletIcon /></Cell>
              <Cell w={8}><Arrow w={5} /></Cell>
              <Cell w={25}><BulletIcon square /></Cell>
              <Cell w={7}><Arrow w={5} /></Cell>
              <Cell w={22}><MultiIcon /></Cell>
              <Cell w={6}><Arrow w={5} /></Cell>
              <Cell w={15}><Divider /></Cell>
              <Cell w={17}><IndentIcon out /></Cell>
              <Cell w={23}><IndentIcon /></Cell>
              <Cell w={7}><Divider /></Cell>
              <Hot><PilcrowIcon side="l" /></Hot>
              <Cell w={21}><PilcrowIcon side="r" /></Cell>
              <Cell w={6}><Divider /></Cell>
              <Cell w={25}><SortIcon /></Cell>
              <Cell w={8}><Divider /></Cell>
              <Cell w={22}><PilcrowIcon /></Cell>
            </ToolRow>
            <ToolRow>
              <Hot><Lines rows={alignRows('l')} /></Hot>
              <Cell w={22}><Lines rows={alignRows('c')} /></Cell>
              <Cell w={23}><Lines rows={alignRows('r')} /></Cell>
              <Cell w={19}><Lines rows={alignRows('j')} /></Cell>
              <Cell w={6}><Arrow w={5} /></Cell>
              <Cell w={14}><Divider /></Cell>
              <Cell w={18}><SpacingIcon /></Cell>
              <Cell w={6}><Arrow w={5} /></Cell>
              <Cell w={15}><Divider /></Cell>
              <Cell w={17}><ShadingIcon /></Cell>
              <Cell w={11}><Arrow w={5} /></Cell>
              <Cell w={23}><BorderIcon /></Cell>
              <Cell w={6}><Arrow w={5} /></Cell>
            </ToolRow>
          </GroupBody>
          <Label text="Paragraph" shift={-18} />
        </Group>

        <Group w={542}>
          <GroupBody pl={5} pt={4}>
            <Gallery>
              {galleryStyles.map((g, i) => (
                <StyleCard key={g.name} on={i === 0}>
                  <Sample><SampleText {...g.style}>{g.sample}</SampleText></Sample>
                  <Txt s={10.5} ls={g.ls}>{g.name}</Txt>
                </StyleCard>
              ))}
              <GalleryScroll>
                <div><Arrow up c="#bbb" w={5} /></div>
                <div><Arrow w={5} /></div>
                <div><svg width="6" height="6" viewBox="0 0 6 6"><path d="M0 .5H6" stroke="#555" /><path d="M0 2.500H6L3 5.500Z" fill="#555" /></svg></div>
              </GalleryScroll>
            </Gallery>
            <ChangeStyles>
              <ChangeStylesIcon />
              <Txt ls={-0.1}>Change</Txt>
              <Command g={2} h={12}><Txt ls={-0.1}>Styles</Txt><Arrow w={5} /></Command>
            </ChangeStyles>
          </GroupBody>
          <Label text="Styles" shift={-18} />
        </Group>

        <Group w={71}>
          <GroupBody pl={7} pt={2}>
            <CommandList>
              <Command g={3}><FindIcon /><Txt ls={-0.1}>Find</Txt><Arrow w={5} /></Command>
              <Command g={3}><ReplaceIcon /><Txt ls={-0.2}>Replace</Txt></Command>
              <Command g={3}><Cell w={15}><SelectIcon /></Cell><Txt ls={-0.2}>Select</Txt><Arrow w={5} /></Command>
            </CommandList>
          </GroupBody>
          <GroupLabel><i /><Txt c="#6d7178">Editing</Txt></GroupLabel>
        </Group>
      </Ribbon>

      <Workspace>
        <Panel>
          <PanelTitle><Txt s={11} c="#4a4d52">Document Recovery</Txt></PanelTitle>
          <PanelIntro><Txt s={10.1}>Word has recovered the following files.  Save</Txt><Txt s={10.1}>the ones you wish to keep.</Txt></PanelIntro>
          <PanelHeading><Txt s={10.5} b>Available files</Txt></PanelHeading>
          <FileBox>
            <FileList>
              {files.map(lines => (
                <FileEntry key={lines[1]}>
                  <WordIcon />
                  <FileLines>{lines.map(l => <Txt key={l} s={10.3} c="#222">{l}</Txt>)}</FileLines>
                </FileEntry>
              ))}
              <FileRule />
            </FileList>
            <FileScroll><Chevron up /><Chevron /></FileScroll>
          </FileBox>
          <HelpRow><HelpIcon s={16} /><Txt s={10.1} c="#1a6bc9">Which file do I want to save?</Txt></HelpRow>
          <CloseButton><Txt s={10.1} c="#222">Close</Txt></CloseButton>
        </Panel>

        <Canvas>
          <Page>
            <DocHeading>UI MOCKUPS</DocHeading>
            <HeadingRule />
            <FormLine>
              <Form>
                <FormTitle>Sign Up</FormTitle>
                <FormText>Please fill in this form to create an account.</FormText>
                <FormRule />
                <Gap h={11} />
                {[['Name', 'Enter  Name'], ['User ID', 'Enter User ID'], ['Password', 'Enter Password']].map(([l, p]) => (
                  <Field key={l}><FieldLabel>{l}</FieldLabel><Input>{p}</Input></Field>
                ))}
                <Gap h={6} />
                <FormButtons>
                  <FormButton c="#ef544c">Cancel</FormButton>
                  <FormButton c="#55b25d">Sign Up</FormButton>
                </FormButtons>
              </Form>
              <Caret />
            </FormLine>
          </Page>
        </Canvas>

        <VScroll>
          <Gap h={3} />
          <svg width="8" height="2"><rect width="8" height="2" fill="#7d828c" /></svg>
          <Gap h={3} />
          <NoteIcon />
          <Gap h={8} />
          <Arrow up w={9} c="#444" />
          <Gap h={222.5} />
          <Thumb><Gripper /></Thumb>
          <Gap h={178.5} />
          <Arrow w={9} c="#444" />
          <Gap h={9} />
          <svg width="6" height="7" viewBox="0 0 6 7"><path d="M0 3.500L3 .5L6 3.500ZM0 6.800L3 3.800L6 6.800Z" fill="#444" /></svg>
          <Gap h={9} />
          <svg width="7" height="7" viewBox="0 0 7 7"><circle cx="3.500" cy="3.500" r="2.700" fill="#ccc" stroke="#777" /></svg>
          <Gap h={9} />
          <svg width="6" height="7" viewBox="0 0 6 7"><path d="M0 .2L3 3.200L6 .2ZM0 3.500L3 6.500L6 3.500Z" fill="#444" /></svg>
        </VScroll>
      </Workspace>

      <StatusBar>
        <StatusItem w={73}><Txt>Page: 3 of 5</Txt></StatusItem>
        <StatusItem w={72} pl={8}><Txt ls={-0.1}>Words: 295</Txt></StatusItem>
        <StatusItem w={111} pl={8}><ProofIcon /><Cell w={14} /><Txt ls={-0.1}>English (U.K.)</Txt></StatusItem>
        <StatusItem w={765} />
        <Cell w={3} />
        <Hot w={18} h={17}><Lines rows={[[0, 0, 11], [2, 3, 7], [2, 5, 7], [2, 7, 7], [0, 10, 11]]} w={11} h={11} c="#555"><path d="M.5 0V11M10.500 0V11" stroke="#555" /></Lines></Hot>
        <Cell w={17}><svg width="11" height="10" viewBox="0 0 11 10" fill="#fff" stroke="#555"><path d="M.5 .5H4L5.500 2L7 .5H10.500V8H7L5.500 9.500L4 8H.5ZM5.500 2V9M2 3H4M2 5H4M7 3H9M7 5H9" /></svg></Cell>
        <Cell w={16}><svg width="12" height="11" viewBox="0 0 12 11"><path d="M.5 .5H9.500V9H.5Z" fill="#fff" stroke="#666" /><path d="M2 3H8M2 5H8" stroke="#888" /><circle cx="8.500" cy="7.500" r="3" fill="#2e77a8" /></svg></Cell>
        <Cell w={18}><Lines rows={[[0, 0, 9], [3, 2.5, 6], [3, 5, 6], [1, 7.5, 8]]} w={9} h={9} c="#777" /></Cell>
        <Cell w={17}><Lines rows={[[0, 0, 10], [0, 2.5, 10], [0, 5, 10], [0, 7.5, 10]]} w={10} h={9} c="#555" /></Cell>
        <Cell w={43}><Txt s={10.5} ls={-0.2}>100%</Txt></Cell>
        <ZoomButton />
        <ZoomTrack><svg width="9" height="12" viewBox="0 0 9 12"><path d="M.5 .5H8.500V7.500L4.500 11.300L.5 7.500Z" fill="#f7f8f9" stroke="#777b80" /></svg></ZoomTrack>
        <ZoomButton plus />
      </StatusBar>

      <Taskbar>
        <TaskButton w={45}><svg width="15" height="15" viewBox="0 0 15 15" fill="#fff"><path d="M0 2L6.500 1.200V7H0ZM7.300 1.100L15 0V7H7.300ZM0 8H6.500V13.800L0 13ZM7.300 8H15V15L7.300 13.900Z" /></svg></TaskButton>
        <SearchBox>
          <svg width="16" height="16" viewBox="0 0 16 16" fill="none" stroke="#ddd" strokeWidth="1.300"><circle cx="9.800" cy="6" r="5" /><path d="M6.300 9.500L.8 15.200" /></svg>
          <Txt s={13.2} c="#c9c9c9">Type here to search</Txt>
        </SearchBox>
        <TaskButton><svg width="16" height="16" viewBox="0 0 16 16"><circle cx="8" cy="8" r="6.500" fill="none" stroke="#f2f2f2" strokeWidth="1.800" /></svg></TaskButton>
        <TaskButton><svg width="16" height="15" viewBox="0 0 16 15" fill="none" stroke="#e5e5e5" strokeWidth="1.200"><path d="M.6 0V2.500H10.500V0M.6 15V12.500H10.500V15M1.500 5H9.500V10H1.500ZM14 0V4M14 8V15" /><circle cx="14" cy="6" r="1" fill="#eee" /></svg></TaskButton>
        <TaskButton open><ExplorerIcon /></TaskButton>
        <TaskButton><ShareIcon /></TaskButton>
        <TaskButton open><ChromeIcon /></TaskButton>
        <TaskButton><EdgeIcon /></TaskButton>
        <TaskButton><PhoneSlot><PhoneIcon /></PhoneSlot></TaskButton>
        <TaskButton><StudioIcon /></TaskButton>
        <TaskButton><PictureFileIcon /></TaskButton>
        <TaskButton open><WinRarIcon /></TaskButton>
        <TaskButton on><TaskWordIcon /></TaskButton>
        <Tray>
          <Cell w={106} />
          <WeatherIcon />
          <Cell w={8} />
          <Cell w={28}><Txt s={12} c="#eee">31°C</Txt></Cell>
          <Cell w={10} />
          <Cell w={24}><TrayChevron /></Cell>
          <Cell w={22}><MeetIcon /></Cell>
          <Cell w={24}><WifiIcon /></Cell>
          <Cell w={19}><BatteryIcon /></Cell>
          <Cell w={37}><Txt s={11} c="#eee">ENG</Txt></Cell>
          <Clock><Txt s={11} c="#eee">8:14 PM</Txt><Txt s={11} c="#eee">16-Jun-21</Txt></Clock>
          <Cell w={49}><NotifyIcon /></Cell>
          <DesktopPeek />
        </Tray>
      </Taskbar>
    </Screen>
  );
}
